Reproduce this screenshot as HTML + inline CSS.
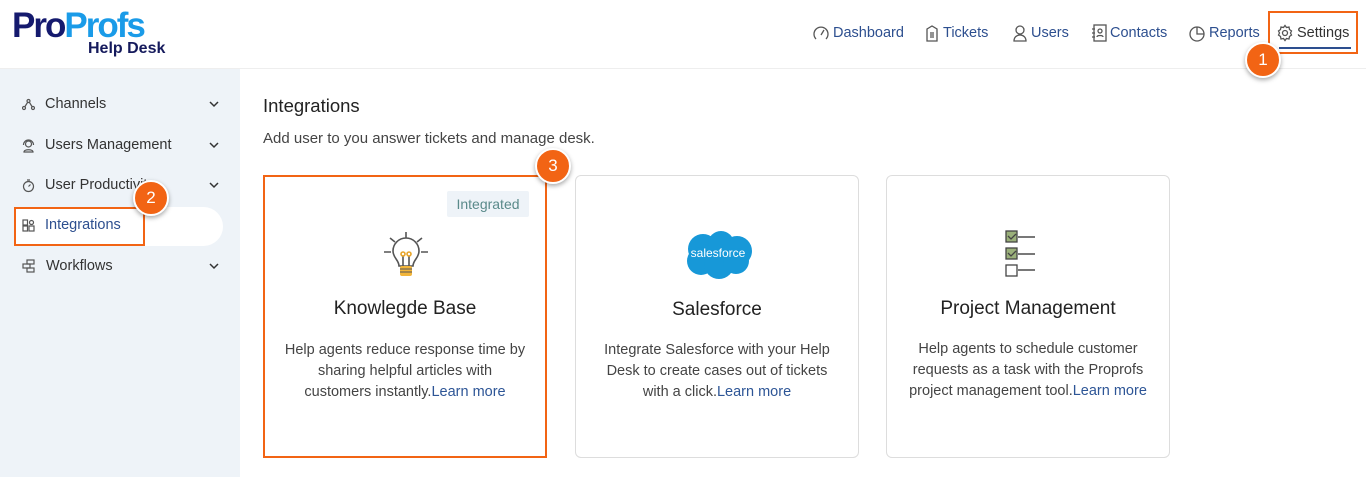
<!DOCTYPE html>
<html><head><meta charset="utf-8"><style>
*{margin:0;padding:0;box-sizing:border-box}
body{width:1366px;height:477px;overflow:hidden;background:#fff;font-family:"Liberation Sans",Roboto,sans-serif;position:relative;color:#333}
.abs{position:absolute}
.logo1{left:12px;top:8px;font-size:35px;font-weight:900;letter-spacing:-2px;line-height:36px}
.logo2{left:88px;top:40px;font-size:16px;font-weight:bold;color:#151a5c}
.hdr{left:0;top:68px;width:1366px;height:1px;background:#eee}
.nav{top:24px;font-size:14.5px;color:#2d4f8f;font-weight:500;display:flex;align-items:center;gap:3px}
.nav svg{stroke:#555;fill:none;stroke-width:1.3}
.side{left:0;top:69px;width:240px;height:408px;background:#eef3f8}
.si{left:22px;font-size:14.5px;color:#333;display:flex;align-items:center;gap:10px}
.si svg{stroke:#555;fill:none;stroke-width:1.2}
.badge{width:36px;height:36px;border-radius:50%;background:#f26414;border:2px solid #fff;box-shadow:0 2px 5px rgba(0,0,0,.35);color:#fff;font-size:17px;display:flex;align-items:center;justify-content:center}
.card{top:175px;width:284px;height:283px;border:1px solid #ddd;border-radius:6px;text-align:center}
.card h3{font-weight:normal;font-size:19px;color:#222;position:absolute;left:0;right:0}
.card p{position:absolute;left:0;right:0;font-size:14.5px;line-height:21px;color:#444;white-space:nowrap}
.card a{color:#2d5596;text-decoration:none}
</style></head><body>
<div class="abs logo1"><span style="color:#151a6e">Pro</span><span style="color:#1a9be8">Profs</span></div>
<div class="abs logo2">Help Desk</div>
<div class="abs hdr"></div>

<div class="abs nav" style="left:812px"><svg width="18" height="18" viewBox="0 0 18 18"><path d="M4 15A7 7 0 1 1 14 15"/><path d="M9 11l3-5"/></svg>Dashboard</div>
<div class="abs nav" style="left:924px"><svg width="16" height="18" viewBox="0 0 16 18"><path d="M3 5l5-3 5 3v12H3z"/><path d="M6 9h4M6 11h4M6 13h4"/></svg>Tickets</div>
<div class="abs nav" style="left:1012px"><svg width="16" height="18" viewBox="0 0 16 18"><circle cx="8" cy="6" r="4"/><path d="M2 17c0-4 3-6 6-6s6 2 6 6z"/></svg>Users</div>
<div class="abs nav" style="left:1091px"><svg width="16" height="18" viewBox="0 0 16 18"><rect x="3" y="1" width="12" height="16"/><path d="M1 5h3M1 9h3M1 13h3"/><circle cx="9" cy="7" r="2"/><path d="M6 13c0-2 6-2 6 0"/></svg>Contacts</div>
<div class="abs nav" style="left:1188px"><svg width="18" height="18" viewBox="0 0 18 18"><circle cx="9" cy="10" r="7"/><path d="M9 3v7h7"/></svg>Reports</div>
<div class="abs nav" style="left:1276px;color:#333"><svg width="18" height="18" viewBox="0 0 18 18"><circle cx="9" cy="9" r="2.5"/><path d="M9 1.5l1.5 2 2.5-.5.5 2.5 2 1.5-1 2 1 2-2 1.5-.5 2.5-2.5-.5L9 16.5l-1.5-2-2.5.5-.5-2.5-2-1.5 1-2-1-2 2-1.5.5-2.5 2.5.5z"/></svg>Settings</div>
<div class="abs" style="left:1279px;top:47px;width:72px;height:2px;background:#2d4f8f"></div>
<div class="abs" style="left:1268px;top:11px;width:90px;height:43px;border:2px solid #f26414"></div>
<div class="abs badge" style="left:1245px;top:42px">1</div>

<div class="abs side"></div>
<div class="abs" style="left:14px;top:207px;width:209px;height:39px;background:#fff;border-radius:0 20px 20px 0"></div>
<div class="abs si" style="top:96px"><svg width="13" height="13" viewBox="0 0 13 13"><circle cx="6.5" cy="3" r="1.5"/><circle cx="2" cy="10" r="1.5"/><circle cx="11" cy="10" r="1.5"/><path d="M5.5 4.5L3 8.5M7.5 4.5L10 8.5"/></svg>Channels</div>
<div class="abs si" style="top:137px"><svg width="13" height="15" viewBox="0 0 13 15"><circle cx="6.5" cy="6" r="3"/><path d="M1.5 7a5 5 0 0 1 10 0M2 14c0-3 9-3 9 0z"/></svg>Users Management</div>
<div class="abs si" style="top:177px"><svg width="13" height="15" viewBox="0 0 13 15"><circle cx="6.5" cy="8.5" r="5"/><path d="M5 2h3M6.5 8.5l2-2"/></svg>User Productivity</div>
<div class="abs si" style="top:217px;color:#2d4f8f"><svg width="13" height="13" viewBox="0 0 13 13"><rect x="1" y="1" width="4.5" height="5"/><rect x="1" y="7" width="4.5" height="5"/><rect x="7" y="7" width="5" height="5"/><circle cx="9.5" cy="3.5" r="2"/></svg>Integrations</div>
<div class="abs si" style="top:258px"><svg width="14" height="14" viewBox="0 0 14 14"><rect x="5" y="1" width="7" height="4"/><rect x="1" y="5" width="7" height="4"/><rect x="5" y="9" width="7" height="4"/></svg>Workflows</div>
<svg class="abs" style="left:209px;top:101px" width="10" height="170" viewBox="0 0 10 170"><g stroke="#333" stroke-width="1.5" fill="none"><path d="M1 1l4 4 4-4"/><path d="M1 42l4 4 4-4"/><path d="M1 82l4 4 4-4"/><path d="M1 163l4 4 4-4"/></g></svg>
<div class="abs" style="left:14px;top:207px;width:131px;height:39px;border:2px solid #f26414"></div>
<div class="abs badge" style="left:133px;top:180px">2</div>

<div class="abs" style="left:263px;top:95px;font-size:18.5px;color:#222">Integrations</div>
<div class="abs" style="left:263px;top:130px;font-size:15px;color:#444">Add user to you answer tickets and manage desk.</div>

<div class="abs card" style="left:263px;border:2px solid #f26414;border-radius:0">
<div class="abs" style="left:182px;top:14px;width:82px;height:26px;background:#eef3f8;color:#5a8a8a;font-size:14px;line-height:26px;border-radius:2px">Integrated</div>
<svg class="abs" style="left:117px;top:53px" width="48" height="52" viewBox="0 0 48 52"><g stroke="#555" stroke-width="1.6" fill="none"><path d="M24 2v6M8 8l5 4M40 8l-5 4M2 22h7M39 22h7"/><path d="M17 36c0-6-6-8-6-15a13 13 0 0 1 26 0c0 7-6 9-6 15z"/><path d="M21 36V26M27 36V26"/><circle cx="21" cy="24" r="2" stroke="#e8a52a"/><circle cx="27" cy="24" r="2" stroke="#e8a52a"/></g><rect x="18" y="36" width="12" height="10" rx="2" fill="#f2b53a"/><path d="M18 39h12M18 42h12" stroke="#555"/></svg>
<h3 style="top:121px">Knowlegde Base</h3>
<p style="top:163px">Help agents reduce response time by<br>sharing helpful articles with<br>customers instantly.<a>Learn more</a></p>
</div>
<div class="abs badge" style="left:535px;top:148px">3</div>

<div class="abs card" style="left:575px">
<svg class="abs" style="left:105px;top:53px" width="74" height="52" viewBox="0 0 74 52"><g fill="#1798d8"><circle cx="22" cy="20" r="15"/><circle cx="40" cy="15" r="13"/><circle cx="56" cy="22" r="15"/><circle cx="20" cy="32" r="14"/><circle cx="38" cy="35" r="15"/><circle cx="55" cy="32" r="13"/></g><text x="37" y="28" font-family="Liberation Sans" font-size="12" fill="#fff" text-anchor="middle">salesforce</text></svg>
<h3 style="top:123px">Salesforce</h3>
<p style="top:164px">Integrate Salesforce with your Help<br>Desk to create cases out of tickets<br>with a click.<a>Learn more</a></p>
</div>

<div class="abs card" style="left:886px">
<svg class="abs" style="left:118px;top:54px" width="34" height="48" viewBox="0 0 34 48"><g stroke="#444" stroke-width="1.3"><rect x="1" y="1" width="11" height="11" fill="#9ab07a"/><rect x="1" y="18" width="11" height="11" fill="#9ab07a"/><rect x="1" y="35" width="11" height="11" fill="#fff"/><path d="M13 7h17M13 24h17M13 40h17" stroke="#666" stroke-width="1.8"/><path d="M3 6l3 3 5-5M3 23l3 3 5-5" fill="none"/></g></svg>
<h3 style="top:122px">Project Management</h3>
<p style="top:163px">Help agents to schedule customer<br>requests as a task with the Proprofs<br>project management tool.<a>Learn more</a></p>
</div>
</body></html>
